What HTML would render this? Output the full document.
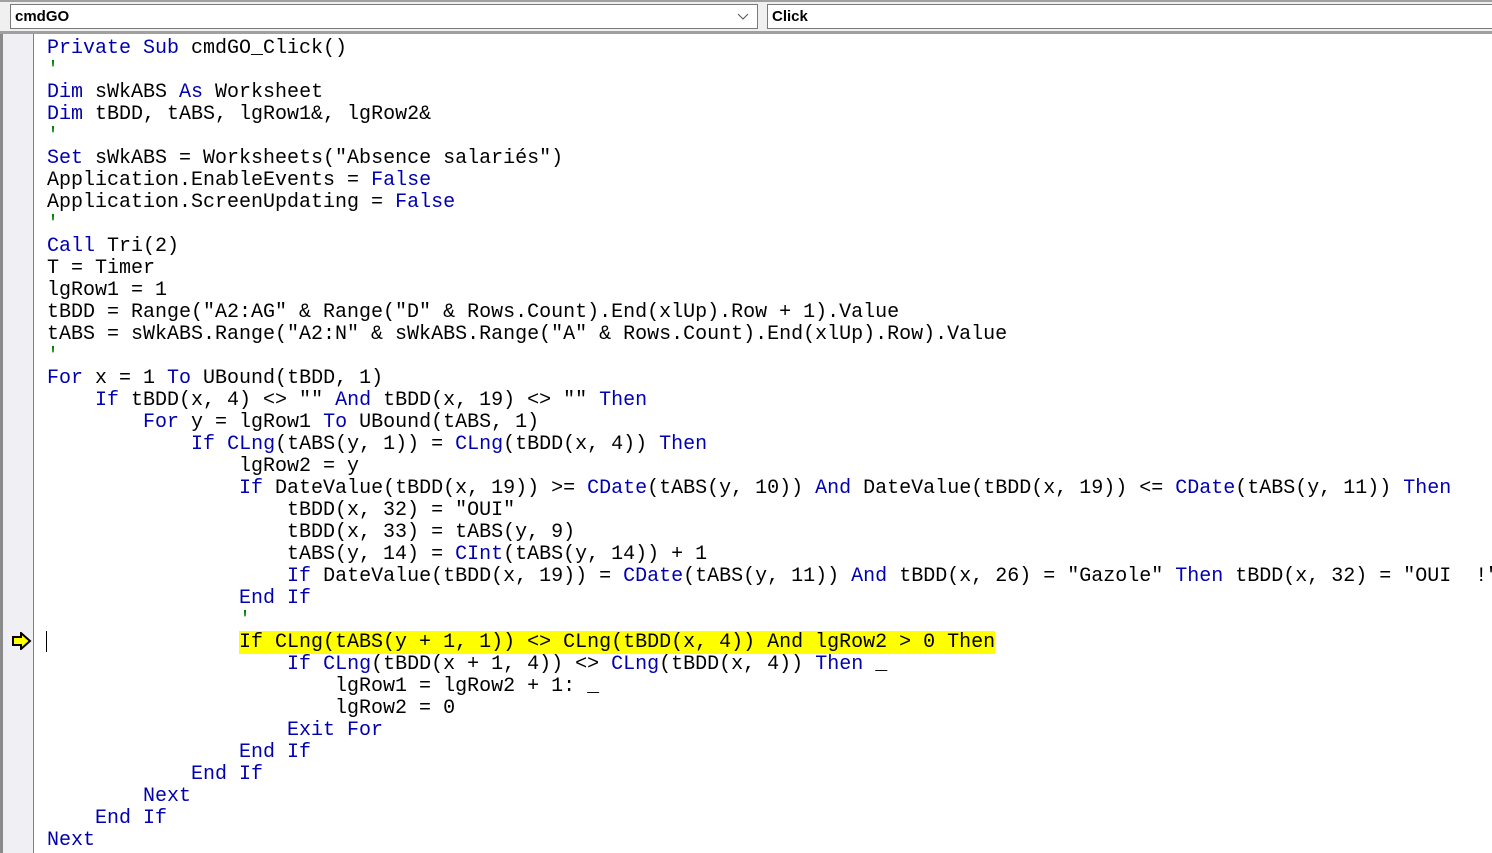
<!DOCTYPE html>
<html><head><meta charset="utf-8"><style>
html,body{margin:0;padding:0;width:1492px;height:853px;overflow:hidden;background:#fff;}
.top{position:absolute;left:0;top:0;width:1492px;height:33px;background:#f0f0f0;border-top:2px solid #a0a0a0;box-sizing:border-box;}
.cb{position:absolute;top:2px;height:25px;background:#fff;border:1px solid #7a7a7a;box-sizing:border-box;font:bold 15px "Liberation Sans",sans-serif;line-height:23px;padding-left:4px;color:#000;}
.sep{position:absolute;left:0;top:31px;width:1492px;height:3px;background:#a0a0a0;}
.gut{position:absolute;left:0;top:34px;width:34px;height:819px;background:#f0eff4;border-left:3px solid #8a8a8a;border-right:1px solid #808080;box-sizing:border-box;}
pre{position:absolute;left:47px;top:38px;margin:0;font:20px/22px "Liberation Mono",monospace;color:#000;white-space:pre;}
.k{color:#0000b0}.c{color:#008000}
.hl{background:#ffff00;}
</style></head><body>
<div class="top">
<div class="cb" style="left:10px;width:748px;">cmdGO<svg style="position:absolute;right:8px;top:8px" width="12" height="8"><path d="M1 1 L6 6 L11 1" stroke="#555" fill="none"/></svg></div>
<div class="cb" style="left:767px;width:740px;">Click</div>
</div>
<div class="sep"></div>
<div class="gut"></div>
<svg style="position:absolute;left:12px;top:632px" width="20" height="18"><path d="M1 5 H9 V1 L18 9 L9 17 V13 H1 Z" fill="#ffff00" stroke="#000" stroke-width="2"/></svg>
<div style="position:absolute;left:46px;top:631px;width:1px;height:21px;background:#000"></div>
<pre><span class="k">Private Sub</span> cmdGO_Click()
<span class="c">'</span>
<span class="k">Dim</span> sWkABS <span class="k">As</span> Worksheet
<span class="k">Dim</span> tBDD, tABS, lgRow1&amp;, lgRow2&amp;
<span class="c">'</span>
<span class="k">Set</span> sWkABS = Worksheets("Absence salariés")
Application.EnableEvents = <span class="k">False</span>
Application.ScreenUpdating = <span class="k">False</span>
<span class="c">'</span>
<span class="k">Call</span> Tri(2)
T = Timer
lgRow1 = 1
tBDD = Range("A2:AG" &amp; Range("D" &amp; Rows.Count).End(xlUp).Row + 1).Value
tABS = sWkABS.Range("A2:N" &amp; sWkABS.Range("A" &amp; Rows.Count).End(xlUp).Row).Value
<span class="c">'</span>
<span class="k">For</span> x = 1 <span class="k">To</span> UBound(tBDD, 1)
    <span class="k">If</span> tBDD(x, 4) &lt;&gt; "" <span class="k">And</span> tBDD(x, 19) &lt;&gt; "" <span class="k">Then</span>
        <span class="k">For</span> y = lgRow1 <span class="k">To</span> UBound(tABS, 1)
            <span class="k">If</span> <span class="k">CLng</span>(tABS(y, 1)) = <span class="k">CLng</span>(tBDD(x, 4)) <span class="k">Then</span>
                lgRow2 = y
                <span class="k">If</span> DateValue(tBDD(x, 19)) &gt;= <span class="k">CDate</span>(tABS(y, 10)) <span class="k">And</span> DateValue(tBDD(x, 19)) &lt;= <span class="k">CDate</span>(tABS(y, 11)) <span class="k">Then</span>
                    tBDD(x, 32) = "OUI"
                    tBDD(x, 33) = tABS(y, 9)
                    tABS(y, 14) = <span class="k">CInt</span>(tABS(y, 14)) + 1
                    <span class="k">If</span> DateValue(tBDD(x, 19)) = <span class="k">CDate</span>(tABS(y, 11)) <span class="k">And</span> tBDD(x, 26) = "Gazole" <span class="k">Then</span> tBDD(x, 32) = "OUI  !"
                <span class="k">End If</span>
                <span class="c">'</span>
                <span class="hl">If CLng(tABS(y + 1, 1)) &lt;&gt; CLng(tBDD(x, 4)) And lgRow2 &gt; 0 Then</span>
                    <span class="k">If</span> <span class="k">CLng</span>(tBDD(x + 1, 4)) &lt;&gt; <span class="k">CLng</span>(tBDD(x, 4)) <span class="k">Then</span> _
                        lgRow1 = lgRow2 + 1: _
                        lgRow2 = 0
                    <span class="k">Exit For</span>
                <span class="k">End If</span>
            <span class="k">End If</span>
        <span class="k">Next</span>
    <span class="k">End If</span>
<span class="k">Next</span></pre>
</body></html>
